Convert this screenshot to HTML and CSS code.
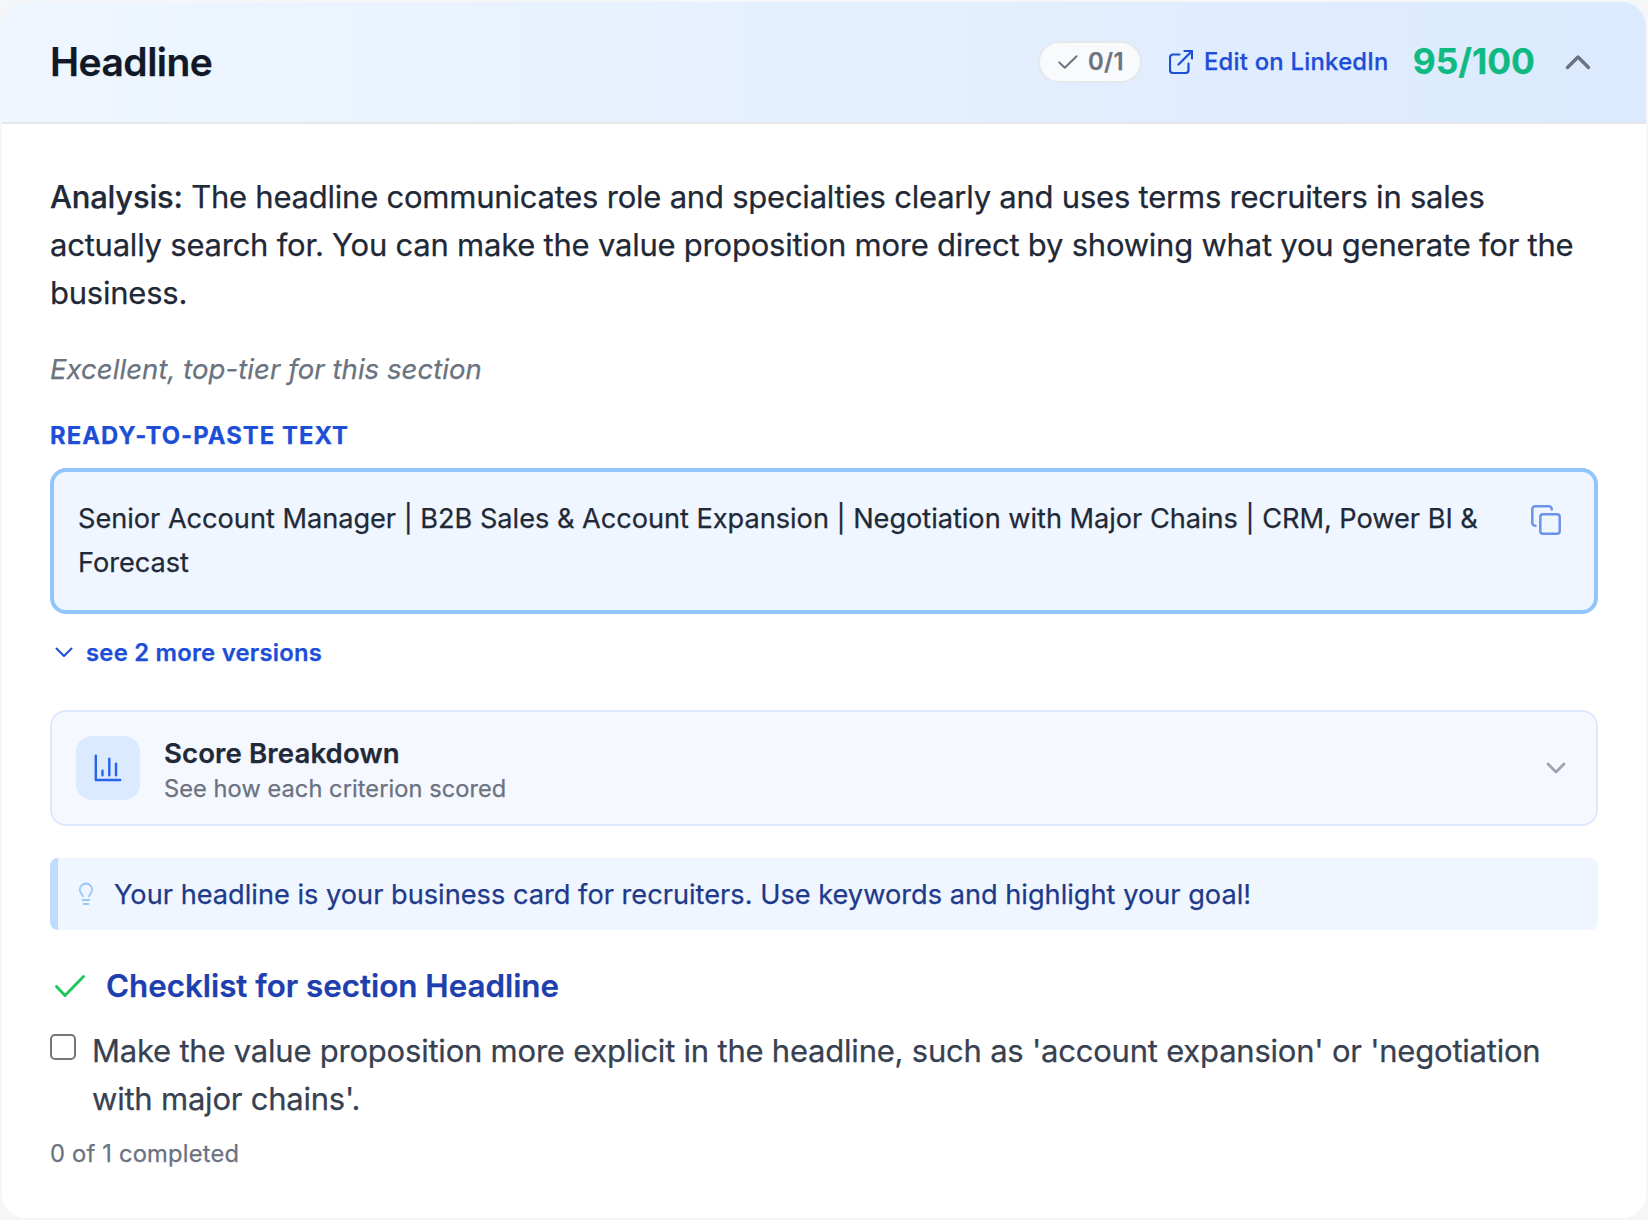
FILE: index.html
```html
<!DOCTYPE html>
<html lang="en">
<head>
<meta charset="utf-8">
<title>Headline</title>
<link rel="stylesheet" href="styles.css">
</head>
<body>
<section class="card">
  <header class="card-header">
    <h2 class="card-title">Headline</h2>
    <div class="header-tools">
      <span class="pill">
        <svg class="pill-check" viewBox="0 0 20 14" fill="none" stroke="currentColor" stroke-width="2" stroke-linecap="round" stroke-linejoin="round"><path d="M1.2 7.4 6.8 12.8 18.6 1.2"/></svg>
        <span class="pill-text">0/1</span>
      </span>
      <a class="edit-link">
        <svg class="edit-icon" viewBox="0 0 24 24" fill="none" stroke="currentColor" stroke-width="2.2" stroke-linecap="round" stroke-linejoin="round"><path d="M10.5 4.5H4A3 3 0 0 0 1 7.5V20a3 3 0 0 0 3 3h12.5a3 3 0 0 0 3-3v-6.5M9.5 14.5 23 1M15.5 1H23v7.5"/></svg>
        <span class="edit-text">Edit on LinkedIn</span>
      </a>
      <span class="score">95/100</span>
      <svg class="collapse-icon" viewBox="0 0 26 16" fill="none" stroke="currentColor" stroke-width="3.4" stroke-linecap="round" stroke-linejoin="round"><path d="M2.5 13.5 13 3l10.5 10.5"/></svg>
    </div>
  </header>
  <div class="card-body">
    <p class="analysis"><strong>Analysis:</strong> The headline communicates role and specialties clearly and uses terms recruiters in sales<br>actually search for. You can make the value proposition more direct by showing what you generate for the<br>business.</p>
    <p class="verdict">Excellent, top-tier for this section</p>
    <h3 class="label">READY-TO-PASTE TEXT</h3>
    <div class="paste-box">
      <p class="paste-text">Senior Account Manager | B2B Sales &amp; Account Expansion | Negotiation with Major Chains | CRM, Power BI &amp;<br>Forecast</p>
      <svg class="copy-icon" viewBox="0 0 30 30" fill="none" stroke="currentColor" stroke-width="2.5" stroke-linejoin="round" stroke-linecap="round"><rect x="9.3" y="9.3" width="19.4" height="19.4" rx="2.8"/><path d="M4.5 20.7H4A2.7 2.7 0 0 1 1.3 18V4A2.7 2.7 0 0 1 4 1.3h14A2.7 2.7 0 0 1 20.7 4v.5"/></svg>
    </div>
    <a class="more-link">
      <svg class="more-icon" viewBox="0 0 18 11" fill="none" stroke="currentColor" stroke-width="2" stroke-linecap="round" stroke-linejoin="round"><path d="M1.5 1.5 9 9l7.5-7.5"/></svg>
      <span>see 2 more versions</span>
    </a>
    <div class="breakdown">
      <span class="tile">
        <svg class="chart-icon" viewBox="0 0 28 28" fill="none" stroke="currentColor" stroke-width="2.4" stroke-linecap="round" stroke-linejoin="round"><path d="M1.8 1.8V26h24.4M8.5 16.8v4.400M15.300 4.800v16.400M22 9.800v11.400"/></svg>
      </span>
      <div class="breakdown-text">
        <div class="breakdown-title">Score Breakdown</div>
        <div class="breakdown-sub">See how each criterion scored</div>
      </div>
      <svg class="expand-icon" viewBox="0 0 20 12" fill="none" stroke="currentColor" stroke-width="2.700" stroke-linecap="round" stroke-linejoin="round"><path d="M2 2l8 8 8-8"/></svg>
    </div>
    <div class="tip">
      <svg class="bulb-icon" viewBox="0 0 16 24" fill="none" stroke="currentColor" stroke-width="1.800" stroke-linecap="round"><path d="M5 14.300C4.700 12 1.800 11.200 1.800 7.700a6.200 6.200 0 0 1 12.400 0c0 3.500-2.900 4.300-3.200 6.600M4.700 18h6.600M5.700 22h4.600"/></svg>
      <span>Your headline is your business card for recruiters. Use keywords and highlight your goal!</span>
    </div>
    <h3 class="checklist-title">
      <svg class="check-icon" viewBox="0 0 32 24" fill="none" stroke="currentColor" stroke-width="3" stroke-linecap="round" stroke-linejoin="round"><path d="M2.5 12.5 11 21.500 29.500 2.500"/></svg>
      <span>Checklist for section Headline</span>
    </h3>
    <label class="item">
      <input class="item-box" type="checkbox">
      <span class="item-text">Make the value proposition more explicit in the headline, such as 'account expansion' or 'negotiation<br>with major chains'.</span>
    </label>
    <p class="progress">0 of 1 completed</p>
  </div>
</section>
</body>
</html>
```
FILE: styles.css
```css
* { box-sizing: border-box; }
body {
  margin: 0;
  padding: 2px;
  background: #f5f6f7;
  font-family: Inter, "Liberation Sans", sans-serif;
  color: #1f2937;
  -webkit-text-stroke: 0.25px currentColor;
}
h2, h3, p { margin: 0; }
svg { display: block; flex: none; }
.card {
  height: 1216px;
  border-radius: 24px;
  background: #fff;
  overflow: hidden;
}
.card-header {
  height: 122px;
  padding: 0 55px 0 48px;
  display: flex;
  align-items: center;
  justify-content: space-between;
  border-bottom: 2px solid #e5e7eb;
  background: linear-gradient(to right, #eff6ff, #dbeafe);
}
.card-title { padding-bottom: 2px; font-size: 39px; font-weight: 600; letter-spacing: -0.53px; color: #111827; }
.header-tools { display: flex; align-items: center; }
.pill {
  width: 104px;
  height: 42px;
  padding-left: 18px;
  display: flex;
  align-items: center;
  gap: 10px;
  border: 2px solid #e5e7eb;
  border-radius: 21px;
  background: #f9fafb;
  color: #6b7280;
  font-size: 23.8px;
  font-weight: 600;
}
.pill-check { width: 20px; height: 14px; }
.pill-text { padding-bottom: 2px; letter-spacing: 0.4px; }
.edit-link {
  margin-left: 27px;
  display: flex;
  align-items: center;
  gap: 11px;
  color: #1d4ed8;
  font-size: 23.8px;
  font-weight: 500;
}
.edit-icon { width: 24px; height: 24px; }
.edit-text { padding-bottom: 2px; letter-spacing: 0.26px; }
.score { margin-left: 24px; padding-bottom: 2px; font-size: 35.4px; font-weight: 700; color: #10b981; }
.collapse-icon { width: 26px; height: 16px; margin-left: 30px; color: #6b7280; }
.card-body { padding: 49px 48px 48px; }
.analysis { font-size: 31px; line-height: 48px; letter-spacing: -0.228px; white-space: nowrap; }
.analysis strong { font-weight: 500; }
.verdict { margin-top: 32px; font-size: 27.5px; line-height: 40px; letter-spacing: 0.06px; font-style: italic; color: #6b7280; }
.label { margin-top: 31px; font-size: 23.8px; line-height: 32px; font-weight: 700; color: #1d4ed8; letter-spacing: 1.05px; }
.paste-box {
  margin-top: 16px;
  height: 146px;
  padding: 25px 33px 20px 24px;
  display: flex;
  justify-content: space-between;
  border: 4px solid #93c5fd;
  border-radius: 16px;
  background: #eff6ff;
}
.paste-text { font-size: 27.2px; line-height: 44px; letter-spacing: -0.035px; white-space: nowrap; }
.copy-icon { width: 30px; height: 30px; margin-top: 8px; color: #6b93ea; }
.more-link {
  margin-top: 22px;
  height: 32px;
  padding-left: 5px;
  display: flex;
  align-items: center;
  gap: 13px;
  color: #1d4ed8;
  font-size: 23.8px;
  font-weight: 600;
  letter-spacing: 0.25px;
}
.more-icon { width: 18px; height: 11px; }
.breakdown {
  margin-top: 42px;
  height: 116px;
  padding: 0 30px 0 24px;
  display: flex;
  align-items: center;
  border: 2px solid #dbeafe;
  border-radius: 16px;
  background: #f5f9ff;
}
.tile {
  width: 64px;
  height: 64px;
  display: flex;
  align-items: center;
  justify-content: center;
  border-radius: 16px;
  background: #dbeafe;
  color: #2563eb;
}
.chart-icon { width: 28px; height: 28px; }
.breakdown-text { flex: 1; margin-left: 24px; }
.breakdown-title { font-size: 27.6px; line-height: 41px; letter-spacing: 0.1px; font-weight: 600; }
.breakdown-sub { font-size: 23.6px; line-height: 30px; letter-spacing: 0.07px; color: #6b7280; }
.expand-icon { width: 20px; height: 12px; color: #9ca3af; }
.tip {
  margin-top: 32px;
  height: 72px;
  padding-left: 20px;
  display: flex;
  align-items: center;
  gap: 20px;
  border-left: 8px solid #bfdbfe;
  border-radius: 8px;
  background: #eff6ff;
  color: #1e3a8a;
  font-size: 27.2px;
}
.bulb-icon { width: 16px; height: 24px; color: #9ac8fb; }
.checklist-title {
  margin-top: 34px;
  height: 44px;
  padding-left: 4px;
  display: flex;
  align-items: center;
  gap: 20px;
  color: #1e40af;
  font-size: 31.3px;
  font-weight: 600;
}
.check-icon { width: 32px; height: 24px; color: #22c55e; }
.item { margin-top: 18px; display: flex; align-items: flex-start; gap: 16px; }
.item-box {
  appearance: none;
  width: 26px;
  height: 26px;
  margin: 8px 0 0;
  flex: none;
  border: 2px solid #767676;
  border-radius: 5px;
  background: #fff;
}
.item-text { padding-top: 1px; font-size: 31px; line-height: 48px; letter-spacing: -0.22px; color: #374151; white-space: nowrap; }
.progress { margin-top: 15px; font-size: 23.7px; line-height: 32px; letter-spacing: 0.2px; color: #6b7280; }
```
